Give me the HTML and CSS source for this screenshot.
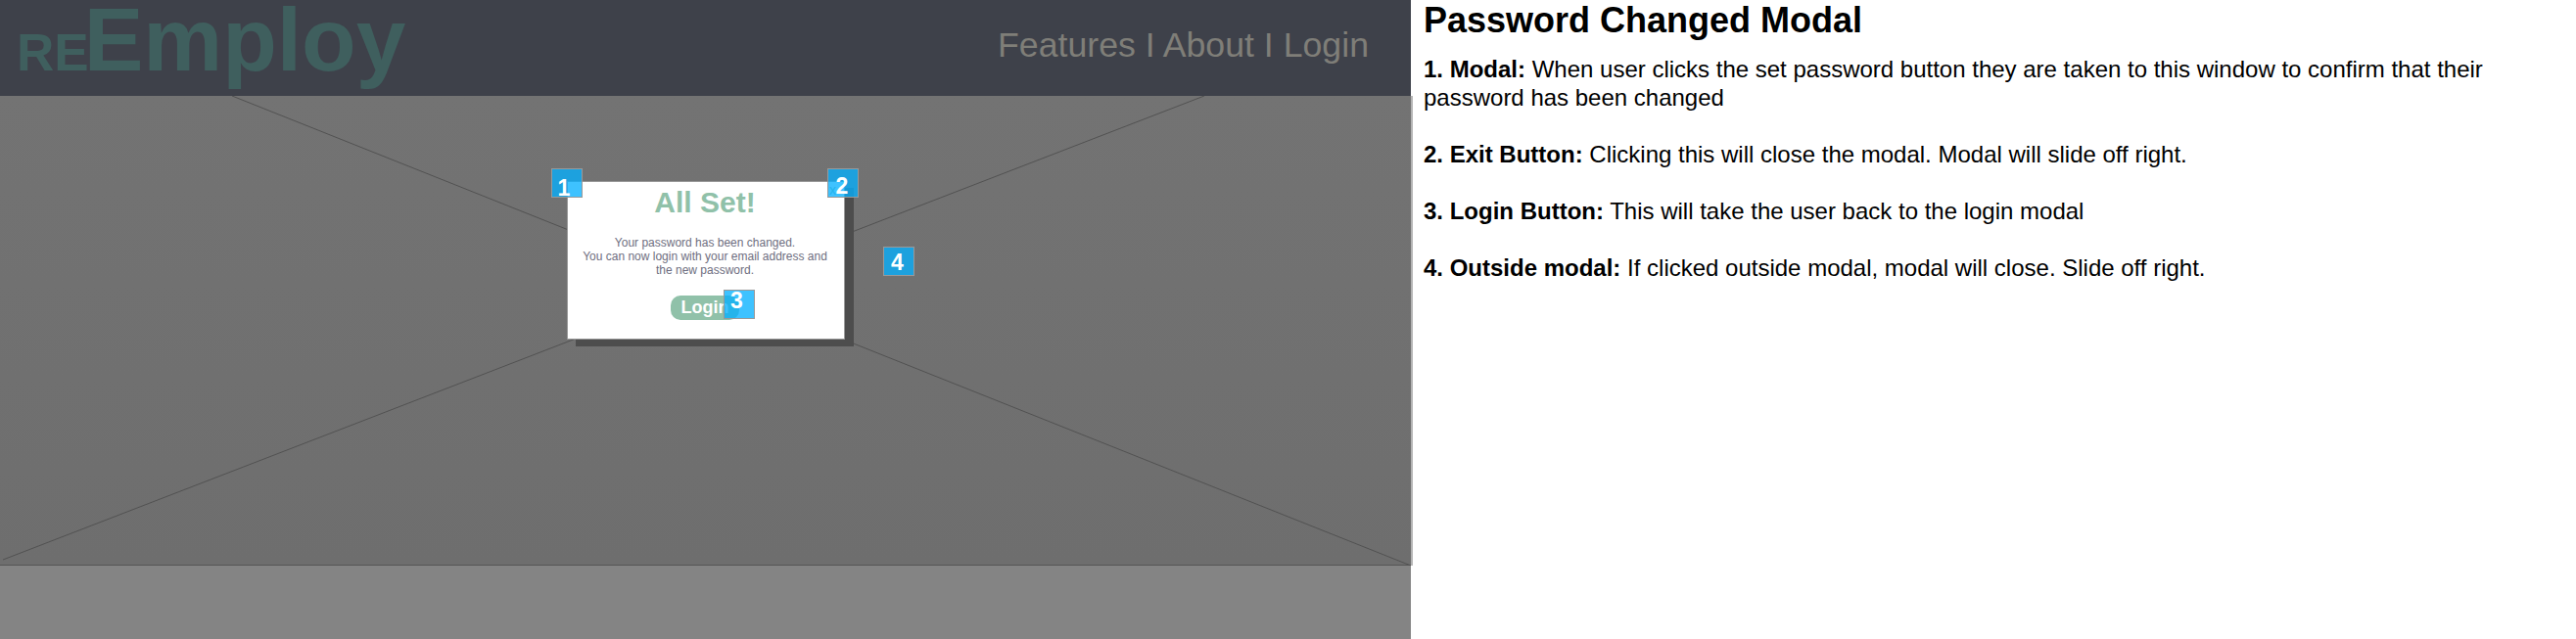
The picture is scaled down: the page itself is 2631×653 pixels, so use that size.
FILE: index.html
```html
<!DOCTYPE html>
<html lang="en">
<head>
  <meta charset="UTF-8">
  <title>Password Changed Modal</title>
  <link rel="stylesheet" href="styles.css">
</head>
<body>

<!-- Wireframe -->
<div class="wireframe">
  <header class="topbar">
    <div class="logo"><span class="logo-re">RE</span>Employ</div>
    <nav class="topnav">Features I About I Login</nav>
  </header>

  <section class="hero">
    <svg class="hero-cross" width="1441" height="480" viewBox="0 0 1441 480">
      <line x1="237" y1="0" x2="1441" y2="480"></line>
      <line x1="1230" y1="0" x2="3" y2="474"></line>
    </svg>

    <div class="modal">
      <span class="modal-close">x</span>
      <h2>All Set!</h2>
      <p>Your password has been changed.<br>You can now login with your email address and the new password.</p>
      <button class="login-btn">Login</button>

      <span class="badge badge-1">1</span>
      <span class="badge badge-2">2</span>
      <span class="badge badge-3">3</span>
      <span class="badge badge-4">4</span>
    </div>
  </section>

  <footer class="bottombar"></footer>
</div>

<!-- Notes -->
<main class="notes">
  <h1>Password Changed Modal</h1>
  <p><b>1. Modal:</b> When user clicks the set password button they are taken to this window to confirm that their password has been changed</p>
  <p><b>2. Exit Button:</b> Clicking this will close the modal. Modal will slide off right.</p>
  <p><b>3. Login Button:</b> This will take the user back to the login modal</p>
  <p><b>4. Outside modal:</b> If clicked outside modal, modal will close. Slide off right.</p>
</main>

</body>
</html>
```

FILE: styles.css
```css
/* General Styles */
html, body {
  height: 100%;
}
body {
  display: flex;
  margin: 0;
  background-color: white;
  font-family: "Liberation Sans", Arial, sans-serif;
  overflow: hidden;
}

/* Wireframe */
.wireframe {
  display: flex;
  flex-direction: column;
  flex: 0 0 1441px;
  height: 653px;
}
.topbar {
  display: flex;
  justify-content: space-between;
  align-items: flex-start;
  flex: 0 0 98px;
  box-sizing: border-box;
  padding: 0 43px 0 17px;
  background-color: #3e414a;
}
.logo {
  margin-top: -1px;
  font-size: 91px;
  line-height: 84px;
  font-weight: bold;
  color: #3f5f5e;
}
.logo-re {
  margin-right: -5px;
  font-size: 53px;
}
.topnav {
  margin-top: 26px;
  font-size: 35.7px;
  line-height: 40px;
  color: #7f7e78;
}
.hero {
  position: relative;
  flex: 0 0 480px;
  box-sizing: border-box;
  padding: 87px 0 0 1px;
  background: linear-gradient(#737373, #6e6e6e);
  border-bottom: 1px solid #555;
}
.hero-cross {
  position: absolute;
  top: 0;
  left: 0;
}
.hero-cross line {
  stroke: #525252;
  stroke-width: 1;
}
.hero::after {
  content: "";
  position: absolute;
  top: 0;
  bottom: -1px;
  left: 1441px;
  width: 2px;
  background-color: #b5b5b5;
}
.bottombar {
  flex: 1;
  background-color: #848484;
}

/* Modal */
.modal {
  position: relative;
  box-sizing: border-box;
  width: 284px;
  height: 162px;
  margin: 0 auto;
  padding: 3px 2px 0 0;
  background-color: white;
  border: 1px solid #999;
  box-shadow: 9px 7px 0 #4d4d4d;
  text-align: center;
}
.modal h2 {
  margin: 0;
  font-size: 30px;
  line-height: 36px;
  color: #90c1a9;
}
.modal p {
  margin: 16px 13px 19px;
  font-size: 12px;
  line-height: 14px;
  color: #6e6e80;
}
.modal-close {
  position: absolute;
  top: 0;
  right: 8px;
  font-size: 14px;
  color: #90c1a9;
}
.login-btn {
  display: block;
  width: 70px;
  height: 25px;
  margin: 0 auto;
  padding: 0;
  border: 0;
  border-radius: 10px;
  background-color: #90c1a9;
  font-family: inherit;
  font-size: 18px;
  font-weight: bold;
  color: white;
}

/* Numbered markers */
.badge {
  position: absolute;
  box-sizing: border-box;
  width: 32px;
  height: 30px;
  border: 1px solid #999;
  background-color: rgba(4, 175, 255, 0.77);
  font-size: 23px;
  font-weight: bold;
  line-height: 26px;
  color: white;
  text-align: center;
}
.badge-1 {
  top: -14px;
  left: -17px;
  padding-top: 6px;
  padding-right: 6px;
}
.badge-2 {
  top: -14px;
  left: 265px;
  padding-top: 4px;
  padding-right: 2px;
}
.badge-3 {
  top: 110px;
  left: 159px;
  padding-right: 5px;
  line-height: 21px;
}
.badge-4 {
  top: 66px;
  left: 322px;
  padding-top: 2px;
  padding-right: 3px;
}

/* Notes */
.notes {
  flex: 1;
  margin-left: 2px;
  padding: 0 67px 0 11px;
  font-size: 24px;
  line-height: 29px;
  color: black;
}
.notes h1 {
  margin: 0;
  padding-top: 1px;
  font-size: 36px;
  line-height: 40px;
}
.notes p {
  margin: 15px 0 29px;
}
.notes p + p {
  margin-top: 0;
}
```
